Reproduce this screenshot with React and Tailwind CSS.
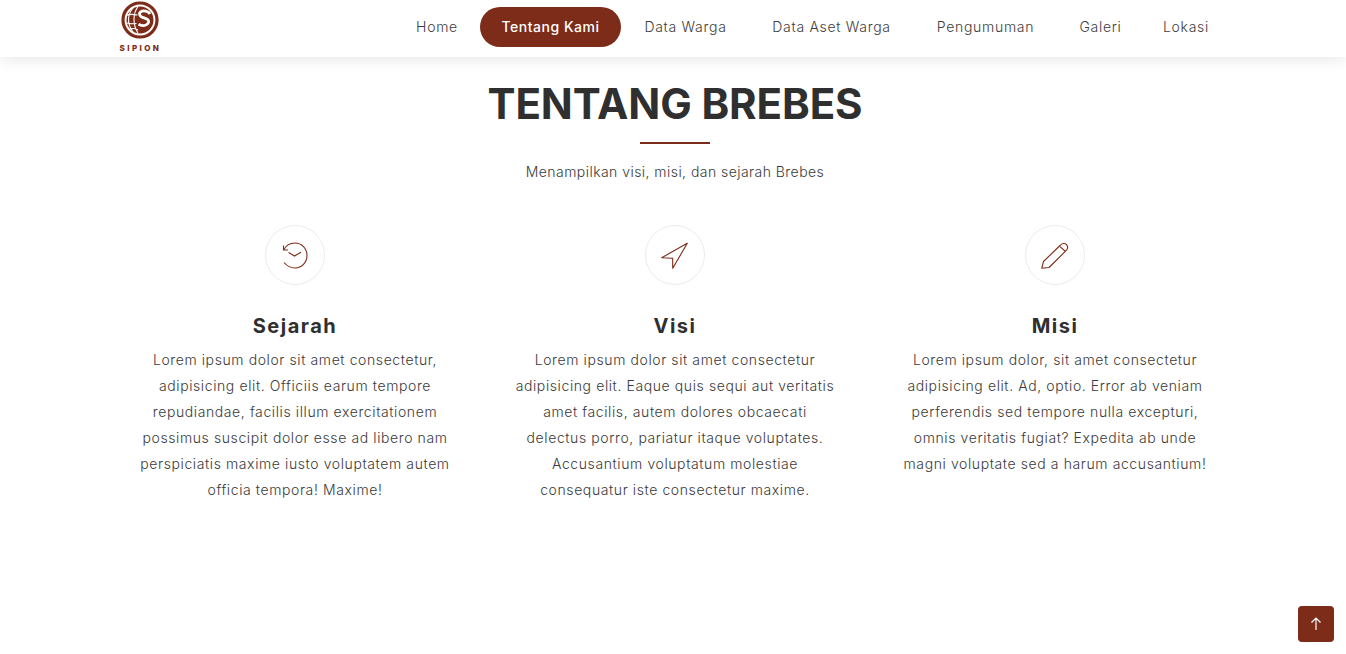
import React from "react";

const font = { fontFamily: '"Inter", "Liberation Sans", sans-serif' };

const navItems = [
  { label: "Home", width: "w-[86px]" },
  { label: "Tentang Kami", width: "w-[141px]", active: true },
  { label: "Data Warga", width: "w-[129px]" },
  { label: "Data Aset Warga", width: "w-[163px]" },
  { label: "Pengumuman", width: "w-[145px]" },
  { label: "Galeri", width: "w-[85px]" },
  { label: "Lokasi", width: "w-[86px]" },
];

const Logo = () => (
  <svg width="38" height="38" viewBox="0 0 38 38">
    <circle cx="19" cy="19" r="17" fill="none" stroke="#7c2c18" strokeWidth="3.200" />
    <circle cx="19" cy="19" r="13.500" fill="#7c2c18" />
    <path d="M12 7c-3 3.500-4.500 7-4.500 11.500S9 27 12 31M17 5.500c-3 4-4 8-4 13s1 9 4 13.500M5.500 14c3-.8 7-.8 11 0M5.500 22c3 .8 6 1 10 .5M9 28c3-1 5-1 8 1" fill="none" stroke="#fff" strokeWidth="1.100" />
    <path d="M29 13c-1.500-3-7-4-9.500-2-2 1.700-.5 4.500 2 5.300l3 1c3 1 4 3 2.500 5-2 2.500-6 3-9.500 1" fill="none" stroke="#fff" strokeWidth="2.800" />
  </svg>
);

const HistoryIcon = () => (
  <svg width="30" height="30" viewBox="0 0 30 30" fill="none" stroke="#7c2c18" strokeWidth="1.100">
    <path d="M4 9.500C6 5.500 10 3 15 3c6.600 0 12 5.400 12 12.500S21.600 28 15 28c-4.500 0-8-2-11-5.500" />
    <path d="M3.500 5.500v4.500h4.500" />
    <path d="M8.500 12.500l6 3.500 6.500-3.800" />
  </svg>
);

const NavigationIcon = () => (
  <svg width="30" height="30" viewBox="0 0 30 30" fill="none" stroke="#7c2c18" strokeWidth="1.100" strokeLinejoin="round">
    <path d="M27.300 3.300L1.700 17.700l11 .6v10Z" />
  </svg>
);

const PencilIcon = () => (
  <svg width="30" height="30" viewBox="0 0 30 30" fill="none" stroke="#7c2c18" strokeWidth="1.100" strokeLinejoin="round">
    <path d="M20 5.500c2-2.500 5-2.500 6.500-.8s1.500 4-.5 6L9 27.500l-7.300.8 1.800-6.800Z" />
    <path d="M20 6.700l5 4.300" />
  </svg>
);

const columns = [
  {
    title: "Sejarah",
    icon: <HistoryIcon />,
    lines: [
      "Lorem ipsum dolor sit amet consectetur,",
      "adipisicing elit. Officiis earum tempore",
      "repudiandae, facilis illum exercitationem",
      "possimus suscipit dolor esse ad libero nam",
      "perspiciatis maxime iusto voluptatem autem",
      "officia tempora! Maxime!",
    ],
  },
  {
    title: "Visi",
    icon: <NavigationIcon />,
    lines: [
      "Lorem ipsum dolor sit amet consectetur",
      "adipisicing elit. Eaque quis sequi aut veritatis",
      "amet facilis, autem dolores obcaecati",
      "delectus porro, pariatur itaque voluptates.",
      "Accusantium voluptatum molestiae",
      "consequatur iste consectetur maxime.",
    ],
  },
  {
    title: "Misi",
    icon: <PencilIcon />,
    lines: [
      "Lorem ipsum dolor, sit amet consectetur",
      "adipisicing elit. Ad, optio. Error ab veniam",
      "perferendis sed tempore nulla excepturi,",
      "omnis veritatis fugiat? Expedita ab unde",
      "magni voluptate sed a harum accusantium!",
    ],
  },
];

const App = () => {
  return (
    <div className="relative h-[654px] overflow-hidden bg-white text-[#444444]" style={font}>
      <header className="h-[57px] bg-white shadow-[0_2px_15px_rgba(0,0,0,0.1)]">
        <div className="flex h-full w-[1140px] mx-auto">
          <div className="ml-[16px] flex flex-col items-center w-[42px] shrink-0 pt-px">
            <Logo />
            <span className="mt-[4px] pl-px text-[8px] leading-[10px] font-extrabold tracking-[0.3em] text-[#7c2c18]">SIPION</span>
          </div>
          <nav className="ml-auto mr-[14px] flex items-start pt-[7px]">
            {navItems.map((item) => (
              <a
                key={item.label}
                href="#"
                className={`flex h-10 items-center justify-center rounded-full pb-px text-[14px] ${item.width} ${
                  item.active ? "bg-[#7c2c18] text-white font-medium tracking-[0.5px]" : "text-[#3d3d3d] font-light tracking-[0.7px]"
                }`}
              >
                {item.label}
              </a>
            ))}
          </nav>
        </div>
      </header>

      <main className="w-[1140px] mx-auto translate-x-[2px]">
        <div className="flex flex-col items-center">
          <h1 className="mt-[22px] text-[42px] leading-[50px] font-bold tracking-[-0.1px] text-[#2f2f2f]">TENTANG BREBES</h1>
          <div className="mt-[13px] h-0.5 w-[70px] bg-[#7c2c18]" />
          <p className="mt-[18px] text-[14px] leading-[20px] font-light tracking-[0.45px] text-[#3a3a3a]">Menampilkan visi, misi, dan sejarah Brebes</p>
        </div>
        <div className="mt-[43px] grid grid-cols-3">
          {columns.map((col) => (
            <div key={col.title} className="flex flex-col items-center">
              <div className="flex h-[60px] w-[60px] items-center justify-center rounded-full border border-[#ececec]">
                {col.icon}
              </div>
              <h3 className="mt-[26px] text-[20px] leading-[30px] font-bold tracking-[1.5px] text-[#2f2f2f]">{col.title}</h3>
              <div className="mt-[6px] text-center text-[14px] leading-[26px] font-light tracking-[0.6px] text-[#3a3a3a]">
                {col.lines.map((line) => (
                  <div key={line} className="whitespace-nowrap">{line}</div>
                ))}
              </div>
            </div>
          ))}
        </div>
      </main>

      <a href="#" className="absolute right-3 bottom-3 flex h-9 w-9 items-center justify-center rounded bg-[#7c2c18]">
        <svg width="14" height="14" viewBox="0 0 14 14" fill="none" stroke="#ffffff" strokeWidth="1.200">
          <path d="M7 13V1M2.500 5.500L7 1l4.500 4.500" />
        </svg>
      </a>
    </div>
  );
};

export default App;
